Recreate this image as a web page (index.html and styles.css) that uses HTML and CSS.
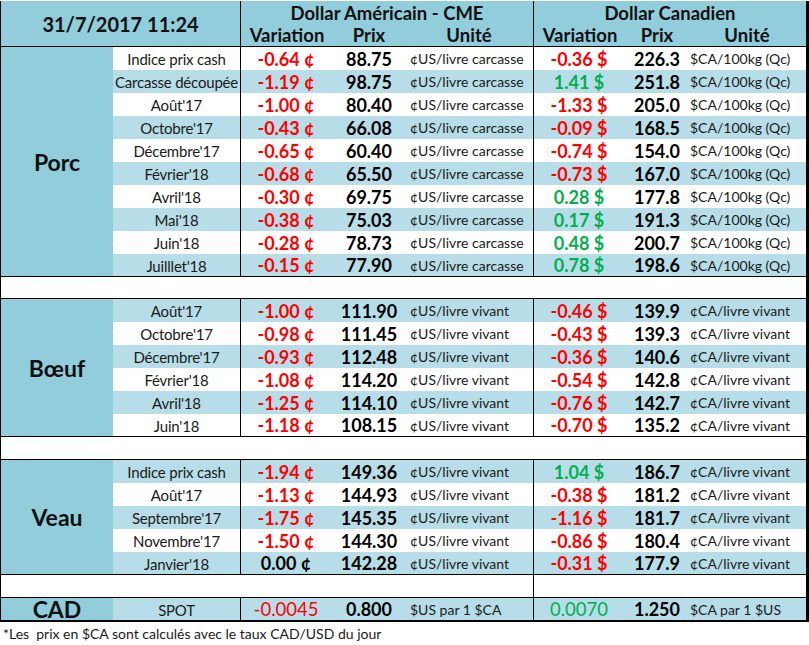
FILE: index.html
```html
<!DOCTYPE html>
<html lang="fr">
<head>
<meta charset="utf-8">
<title>Prix porc, bœuf, veau</title>
<link rel="stylesheet" href="styles.css">
</head>
<body>
<div class="sheet">
  <div class="grid head">
    <div class="date">31/7/2017 11:24</div>
    <div class="cur us">Dollar Américain - CME</div>
    <div class="cur">Dollar Canadien</div>
    <div class="hc">Variation</div>
    <div class="hc">Prix</div>
    <div class="hc sep">Unité</div>
    <div class="hc">Variation</div>
    <div class="hc">Prix</div>
    <div class="hc">Unité</div>
  </div>

  <div class="grid sec porc">
    <div class="cat">Porc</div>
    <div class="row"><div class="lab">Indice prix cash</div><div class="var neg">-0.64 ¢</div><div class="px">88.75</div><div class="unit">¢US/livre carcasse</div><div class="var neg">-0.36 $</div><div class="px">226.3</div><div class="unit ca">$CA/100kg (Qc)</div></div>
    <div class="row lt"><div class="lab">Carcasse découpée</div><div class="var neg">-1.19 ¢</div><div class="px">98.75</div><div class="unit">¢US/livre carcasse</div><div class="var pos">1.41 $</div><div class="px">251.8</div><div class="unit ca">$CA/100kg (Qc)</div></div>
    <div class="row"><div class="lab">Août'17</div><div class="var neg">-1.00 ¢</div><div class="px">80.40</div><div class="unit">¢US/livre carcasse</div><div class="var neg">-1.33 $</div><div class="px">205.0</div><div class="unit ca">$CA/100kg (Qc)</div></div>
    <div class="row lt"><div class="lab">Octobre'17</div><div class="var neg">-0.43 ¢</div><div class="px">66.08</div><div class="unit">¢US/livre carcasse</div><div class="var neg">-0.09 $</div><div class="px">168.5</div><div class="unit ca">$CA/100kg (Qc)</div></div>
    <div class="row"><div class="lab">Décembre'17</div><div class="var neg">-0.65 ¢</div><div class="px">60.40</div><div class="unit">¢US/livre carcasse</div><div class="var neg">-0.74 $</div><div class="px">154.0</div><div class="unit ca">$CA/100kg (Qc)</div></div>
    <div class="row lt"><div class="lab">Février'18</div><div class="var neg">-0.68 ¢</div><div class="px">65.50</div><div class="unit">¢US/livre carcasse</div><div class="var neg">-0.73 $</div><div class="px">167.0</div><div class="unit ca">$CA/100kg (Qc)</div></div>
    <div class="row"><div class="lab">Avril'18</div><div class="var neg">-0.30 ¢</div><div class="px">69.75</div><div class="unit">¢US/livre carcasse</div><div class="var pos">0.28 $</div><div class="px">177.8</div><div class="unit ca">$CA/100kg (Qc)</div></div>
    <div class="row lt"><div class="lab">Mai'18</div><div class="var neg">-0.38 ¢</div><div class="px">75.03</div><div class="unit">¢US/livre carcasse</div><div class="var pos">0.17 $</div><div class="px">191.3</div><div class="unit ca">$CA/100kg (Qc)</div></div>
    <div class="row"><div class="lab">Juin'18</div><div class="var neg">-0.28 ¢</div><div class="px">78.73</div><div class="unit">¢US/livre carcasse</div><div class="var pos">0.48 $</div><div class="px">200.7</div><div class="unit ca">$CA/100kg (Qc)</div></div>
    <div class="row lt"><div class="lab">Juilllet'18</div><div class="var neg">-0.15 ¢</div><div class="px">77.90</div><div class="unit">¢US/livre carcasse</div><div class="var pos">0.78 $</div><div class="px">198.6</div><div class="unit ca">$CA/100kg (Qc)</div></div>
  </div>

  <div class="blank b1"></div>

  <div class="grid sec boeuf">
    <div class="cat">Bœuf</div>
    <div class="row lt"><div class="lab">Août'17</div><div class="var neg">-1.00 ¢</div><div class="px">111.90</div><div class="unit">¢US/livre vivant</div><div class="var neg">-0.46 $</div><div class="px">139.9</div><div class="unit ca">¢CA/livre vivant</div></div>
    <div class="row"><div class="lab">Octobre'17</div><div class="var neg">-0.98 ¢</div><div class="px">111.45</div><div class="unit">¢US/livre vivant</div><div class="var neg">-0.43 $</div><div class="px">139.3</div><div class="unit ca">¢CA/livre vivant</div></div>
    <div class="row lt"><div class="lab">Décembre'17</div><div class="var neg">-0.93 ¢</div><div class="px">112.48</div><div class="unit">¢US/livre vivant</div><div class="var neg">-0.36 $</div><div class="px">140.6</div><div class="unit ca">¢CA/livre vivant</div></div>
    <div class="row"><div class="lab">Février'18</div><div class="var neg">-1.08 ¢</div><div class="px">114.20</div><div class="unit">¢US/livre vivant</div><div class="var neg">-0.54 $</div><div class="px">142.8</div><div class="unit ca">¢CA/livre vivant</div></div>
    <div class="row lt"><div class="lab">Avril'18</div><div class="var neg">-1.25 ¢</div><div class="px">114.10</div><div class="unit">¢US/livre vivant</div><div class="var neg">-0.76 $</div><div class="px">142.7</div><div class="unit ca">¢CA/livre vivant</div></div>
    <div class="row"><div class="lab">Juin'18</div><div class="var neg">-1.18 ¢</div><div class="px">108.15</div><div class="unit">¢US/livre vivant</div><div class="var neg">-0.70 $</div><div class="px">135.2</div><div class="unit ca">¢CA/livre vivant</div></div>
  </div>

  <div class="blank b2"></div>

  <div class="grid sec veau">
    <div class="cat">Veau</div>
    <div class="row lt"><div class="lab">Indice prix cash</div><div class="var neg">-1.94 ¢</div><div class="px">149.36</div><div class="unit">¢US/livre vivant</div><div class="var pos">1.04 $</div><div class="px">186.7</div><div class="unit ca">¢CA/livre vivant</div></div>
    <div class="row"><div class="lab">Août'17</div><div class="var neg">-1.13 ¢</div><div class="px">144.93</div><div class="unit">¢US/livre vivant</div><div class="var neg">-0.38 $</div><div class="px">181.2</div><div class="unit ca">¢CA/livre vivant</div></div>
    <div class="row lt"><div class="lab">Septembre'17</div><div class="var neg">-1.75 ¢</div><div class="px">145.35</div><div class="unit">¢US/livre vivant</div><div class="var neg">-1.16 $</div><div class="px">181.7</div><div class="unit ca">¢CA/livre vivant</div></div>
    <div class="row"><div class="lab">Novembre'17</div><div class="var neg">-1.50 ¢</div><div class="px">144.30</div><div class="unit">¢US/livre vivant</div><div class="var neg">-0.86 $</div><div class="px">180.4</div><div class="unit ca">¢CA/livre vivant</div></div>
    <div class="row lt"><div class="lab">Janvier'18</div><div class="var">0.00 ¢</div><div class="px">142.28</div><div class="unit">¢US/livre vivant</div><div class="var neg">-0.31 $</div><div class="px">177.9</div><div class="unit ca">¢CA/livre vivant</div></div>
  </div>

  <div class="grid blank b3">
    <div class="bl-us"></div>
    <div></div>
  </div>

  <div class="grid sec cad">
    <div class="cat">CAD</div>
    <div class="row lt"><div class="lab">SPOT</div><div class="var neg thin">-0.0045</div><div class="px">0.800</div><div class="unit">$US par 1 $CA</div><div class="var pos thin">0.0070</div><div class="px">1.250</div><div class="unit ca">$CA par 1 $US</div></div>
  </div>
</div>
<p class="note">*Les&nbsp; prix en $CA sont calculés avec le taux CAD/USD du jour</p>
</body>
</html>
```
FILE: styles.css
```css
* { box-sizing: border-box; }
html, body { margin: 0; padding: 0; background: #fff; }
body {
  padding-top: 1px;
  font-family: Lato, "Noto Sans", "Liberation Sans", sans-serif;
  color: #1a1a1a;
  width: 809px;
}
.sheet {
  border-left: 1px solid #000;
  border-right: 3px solid #000;
  width: 809px;
}
.grid {
  display: grid;
  grid-template-columns: 112px 128px 92px 72px 129px 92px 62px 118px;
}
.head {
  background: #92cddc;
  grid-template-rows: 22px 23px;
  border-bottom: 1px solid #000;
  color: #111;
  font-weight: 700;
}
.head > div { display: flex; align-items: center; justify-content: center; }
.date {
  grid-column: 1 / 3;
  grid-row: 1 / 3;
  font-size: 20px;
  border-right: 1px solid #000;
  padding-top: 1px;
}
.cur { grid-column: span 3; font-size: 18.5px; padding-top: 2px; }
.cur.us { border-right: 1px solid #000; }
.hc { font-size: 18.5px; }
.hc.sep { border-right: 1px solid #000; }

.sec { border-bottom: 1px solid #000; }
.porc { grid-template-rows: repeat(9, 23px) 22px; }
.boeuf { grid-template-rows: repeat(5, 23px) 22px; }
.veau { grid-template-rows: repeat(4, 23px) 22px; }
.cad { grid-template-rows: 22px; border-bottom: 2px solid #000; }

.cat {
  grid-column: 1;
  grid-row: 1 / -1;
  background: #92cddc;
  display: flex;
  align-items: center;
  justify-content: center;
  font-weight: 700;
  font-size: 23px;
  color: #111;
}
.row { display: contents; }
.row > div {
  background: #fff;
  display: flex;
  align-items: center;
  white-space: nowrap;
  overflow: hidden;
}
.row.lt > div { background: #b7dee8; }
.lab {
  grid-column: 2;
  justify-content: center;
  font-size: 15px;
  letter-spacing: -0.2px;
  border-right: 1px solid #000;
  padding-top: 1px;
}
.var, .px {
  justify-content: center;
  font-size: 18px;
  font-weight: 700;
  color: #000;
}
.var { padding-right: 2px; }
.var.neg { color: #ff0000; }
.var.pos { color: #00b050; }
.var.thin { font-weight: 400; font-size: 18.5px; }
.unit {
  font-size: 14px;
  padding-left: 5px;
  border-right: 1px solid #000;
}
.unit.ca { padding-left: 2px; border-right: 0; }

.blank { background: #fff; border-bottom: 1px solid #000; }
.b1 { height: 22px; }
.b2 { height: 23px; }
.b3 { height: 23px; grid-template-columns: 533px 1fr; }
.bl-us { border-right: 1px solid #000; }

.note {
  margin: 0;
  padding: 3px 0 0 3px;
  font-size: 14px;
  line-height: 18px;
  color: #1a1a1a;
}
```
